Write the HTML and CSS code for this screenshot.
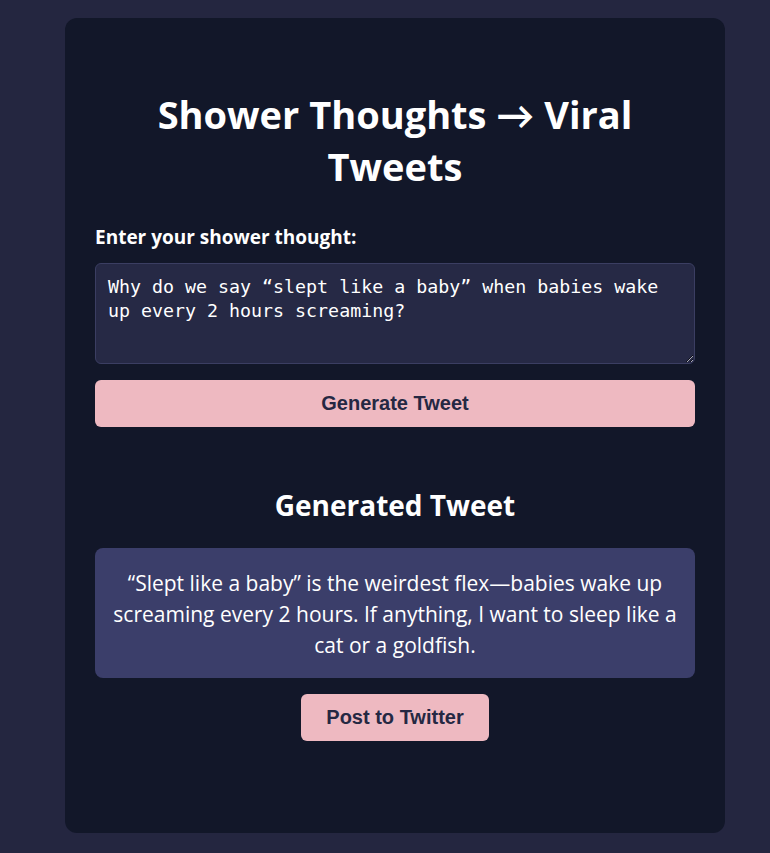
FILE: index.html
```html
<!DOCTYPE html>
<html>
<head>
<meta charset="utf-8">
<link rel="stylesheet" href="styles.css">
</head>
<body>
<main class="card">
  <h1 class="title">Shower Thoughts → Viral Tweets</h1>
  <label class="label" for="thought">Enter your shower thought:</label>
  <textarea id="thought" class="input">Why do we say “slept like a baby” when babies wake up every 2 hours screaming?</textarea>
  <button class="btn btn-full">Generate Tweet</button>
  <section class="result">
    <h2 class="subtitle">Generated Tweet</h2>
    <div class="tweet">“Slept like a baby” is the weirdest flex—babies wake up screaming every 2 hours. If anything, I want to sleep like a cat or a goldfish.</div>
    <button class="btn btn-post">Post to Twitter</button>
  </section>
</main>
</body>
</html>
```
FILE: styles.css
```css
html, body {
  margin: 0;
  padding: 0;
}
body {
  background: #242640;
  font-family: "Open Sans", Lato, sans-serif;
  color: #ffffff;
  padding: 18px 0 21px 20px;
}
.card {
  width: 600px;
  margin: 0 auto;
  background: #121729;
  border-radius: 12px;
  padding: 30px 30px 92px;
  display: flex;
  flex-direction: column;
}
.title {
  margin: 40px auto 34px;
  max-width: 500px;
  font-size: 38px;
  line-height: 52px;
  font-weight: 700;
  text-align: center;
}
.label {
  font-size: 19px;
  font-weight: 700;
  line-height: 22px;
  margin-bottom: 15px;
}
.input {
  box-sizing: border-box;
  width: 600px;
  height: 101px;
  background: #262945;
  border: 1px solid #3b3e62;
  border-radius: 6px;
  color: #ffffff;
  font-family: "DejaVu Sans Mono", monospace;
  font-size: 18.3px;
  line-height: 24px;
  padding: 11px 12px;
  margin: 0 0 16px;
  resize: vertical;
}
.btn {
  background: #eeb9c1;
  color: #252843;
  border: none;
  border-radius: 6px;
  font-family: "Liberation Sans", Arial, sans-serif;
  font-weight: 700;
  font-size: 20px;
  height: 47px;
  cursor: pointer;
}
.btn-full {
  width: 100%;
}
.result {
  display: flex;
  flex-direction: column;
  align-items: center;
  margin-top: 60px;
}
.subtitle {
  margin: 0 0 25px;
  font-size: 28px;
  line-height: 36px;
  font-weight: 700;
}
.tweet {
  box-sizing: border-box;
  width: 600px;
  background: #3b3e6a;
  border-radius: 8px;
  padding: 20px 16px 17px;
  text-align: center;
  font-size: 21px;
  line-height: 31px;
  margin-bottom: 16px;
}
.btn-post {
  padding: 0 25px;
}
```
